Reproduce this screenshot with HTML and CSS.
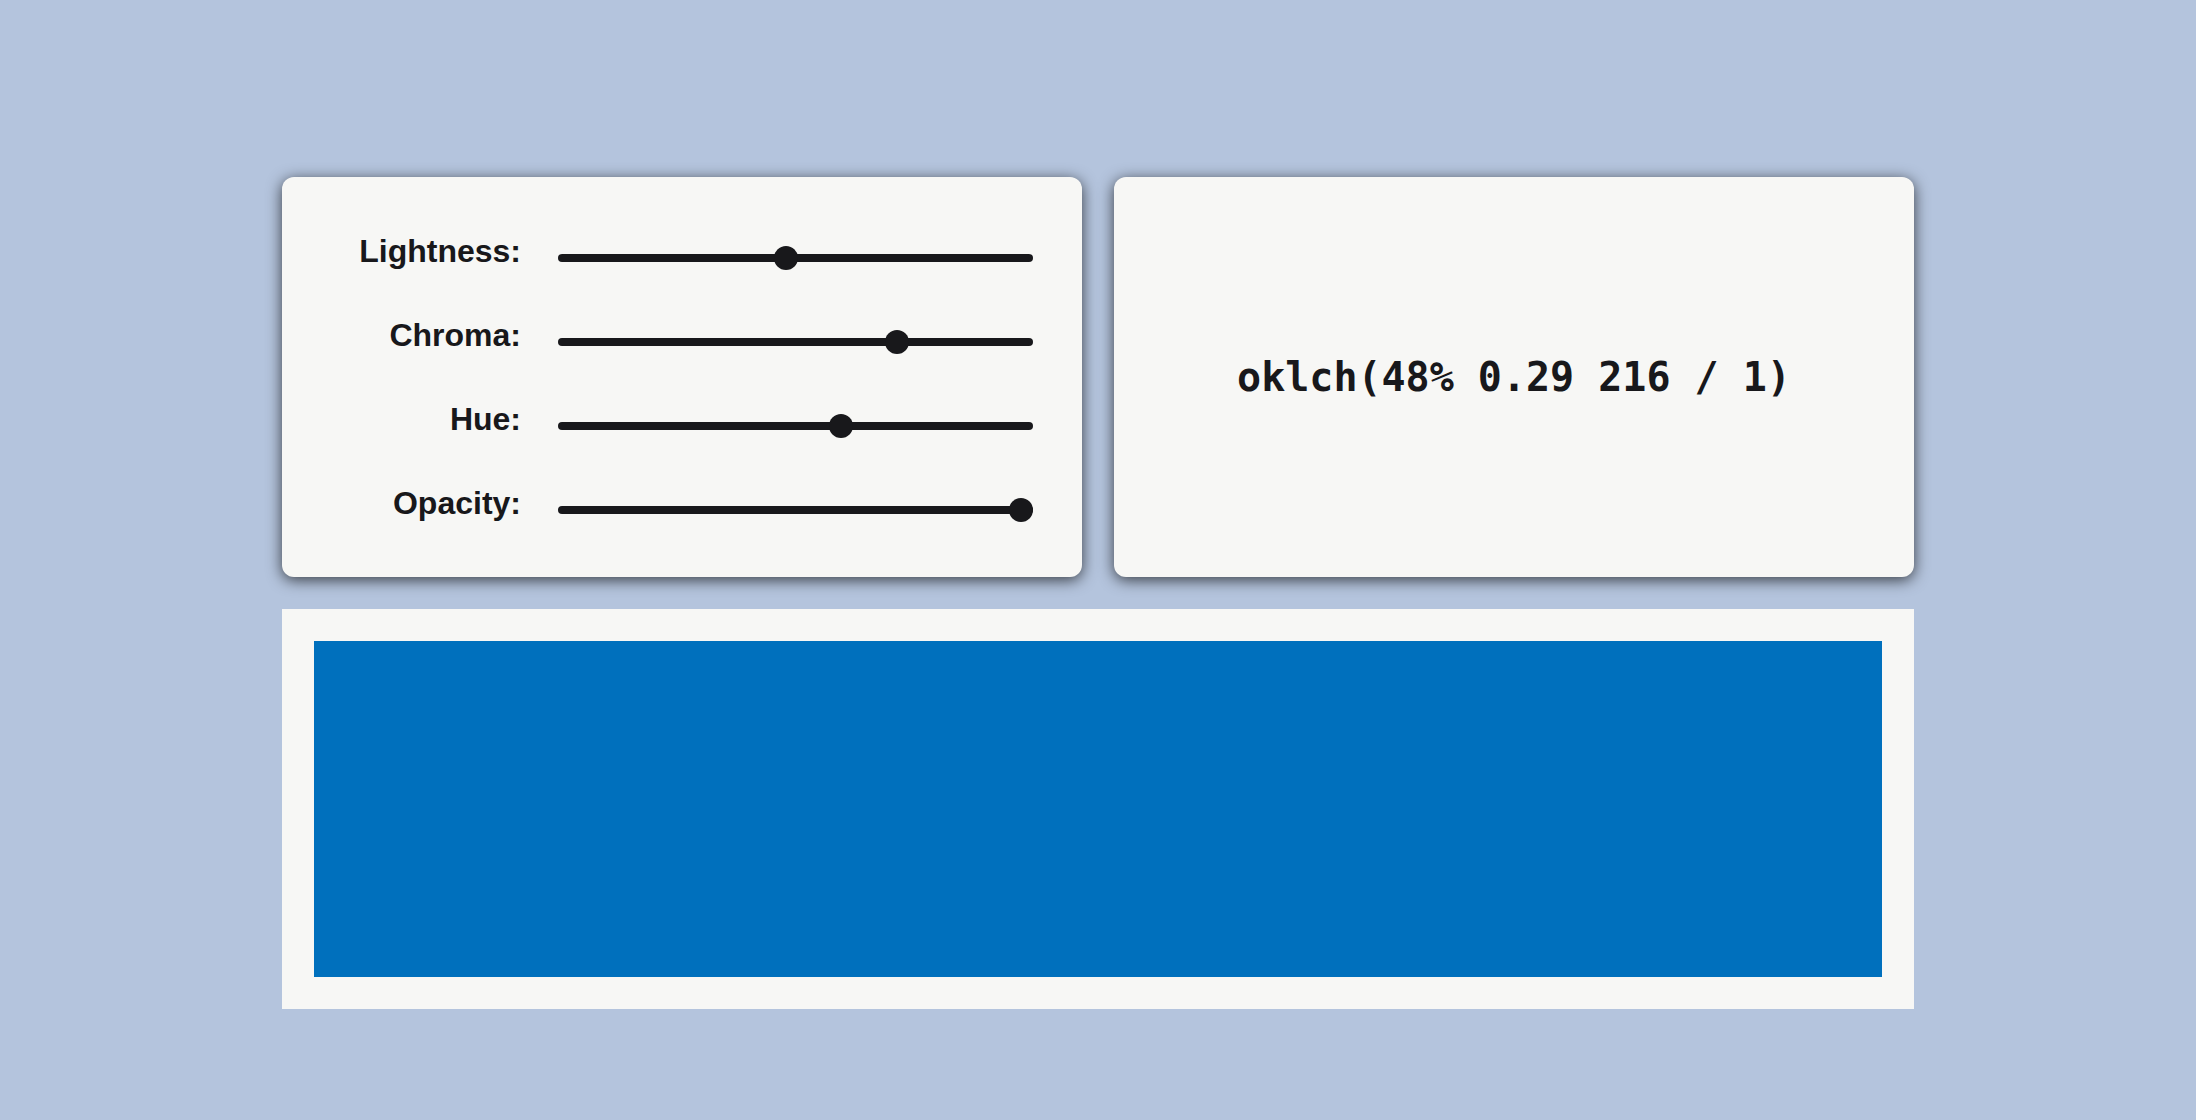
FILE: index.html
```html
<!DOCTYPE html>
<html lang="en">
<head>
<meta charset="utf-8">
<title>OKLCH picker</title>
<link rel="stylesheet" href="styles.css">
</head>
<body>
<main class="app">
  <div class="top">
    <section class="card controls">
      <div class="row">
        <label class="label">Lightness:</label>
        <div class="slider"><div class="track"></div><div class="thumb" style="--v:0.48"></div></div>
      </div>
      <div class="row">
        <label class="label">Chroma:</label>
        <div class="slider"><div class="track"></div><div class="thumb" style="--v:0.725"></div></div>
      </div>
      <div class="row">
        <label class="label">Hue:</label>
        <div class="slider"><div class="track"></div><div class="thumb" style="--v:0.6"></div></div>
      </div>
      <div class="row">
        <label class="label">Opacity:</label>
        <div class="slider"><div class="track"></div><div class="thumb" style="--v:1"></div></div>
      </div>
    </section>
    <section class="card output">
      <code class="value">oklch(48% 0.29 216 / 1)</code>
    </section>
  </div>
  <section class="preview">
    <div class="swatch"></div>
  </section>
</main>
</body>
</html>
```
FILE: styles.css
```css
* { box-sizing: border-box; }
html, body { margin: 0; padding: 0; }
body {
  background: #b4c4dd;
  width: 2196px;
  height: 1120px;
  overflow: hidden;
  font-family: "Liberation Sans", Arial, sans-serif;
  color: #18181b;
}
.app {
  width: 1632px;
  margin: 177px auto 0;
  display: flex;
  flex-direction: column;
  gap: 32px;
}
.top {
  display: flex;
  gap: 32px;
}
.card {
  width: 800px;
  height: 400px;
  background: #f7f7f5;
  border-radius: 12px;
  box-shadow: 0 3px 15px rgba(0, 0, 0, 0.7);
}
.controls {
  display: flex;
  flex-direction: column;
  gap: 36px;
  padding: 57px 49px 0 40px;
}
.row {
  display: grid;
  grid-template-columns: 1fr 475px;
  grid-template-rows: 48px;
  column-gap: 37px;
  align-items: center;
  height: 48px;
}
.label {
  font-weight: 700;
  font-size: 32px;
  line-height: 32px;
  text-align: right;
  padding-bottom: 15px;
}
.slider {
  position: relative;
  height: 24px;
  display: flex;
  align-items: center;
}
.track {
  width: 100%;
  height: 8px;
  border-radius: 4px;
  background: #18181b;
}
.thumb {
  position: absolute;
  top: 50%;
  left: calc(12px + var(--v) * (100% - 24px));
  width: 24px;
  height: 24px;
  border-radius: 50%;
  background: #18181b;
  transform: translate(-50%, -50%);
}
.output {
  display: flex;
  align-items: center;
  justify-content: center;
}
.value {
  font-family: "DejaVu Sans Mono", monospace;
  font-weight: 700;
  font-size: 40px;
}
.preview {
  width: 1632px;
  height: 400px;
  background: #f7f7f5;
  padding: 32px;
}
.swatch {
  width: 100%;
  height: 100%;
  background: #0070bd;
}
```
